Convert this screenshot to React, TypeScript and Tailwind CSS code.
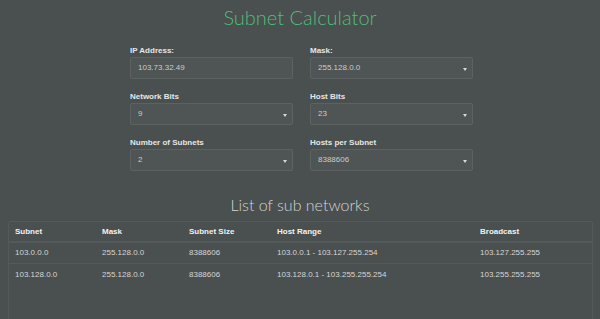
import React from "react";

const Caret = () => (
  <svg width="4" height="3" viewBox="0 0 4 3" className="absolute right-[5px] top-[10px]">
    <path d="M0 0 L4 0 L2 3 Z" fill="#d8d8d8" />
  </svg>
);

function Field({ label, value, select }: { label: string; value: string; select?: boolean }) {
  return (
    <div className="flex flex-col">
      <div className="h-[14px] flex items-end text-[8px] font-bold text-[#e6e6e6] leading-none">{label}</div>
      <div className="relative mt-[2px] h-[22px] border border-[#5c6161] bg-[#4f5454] rounded-[2px] flex items-center pl-[7px] text-[8px] text-[#cccccc] leading-none">
        {value}
        {select && <Caret />}
      </div>
    </div>
  );
}

const rows = [
  ["103.0.0.0", "255.128.0.0", "8388606", "103.0.0.1 - 103.127.255.254", "103.127.255.255"],
  ["103.128.0.0", "255.128.0.0", "8388606", "103.128.0.1 - 103.255.255.254", "103.255.255.255"],
];
const widths = ["w-[87px]", "w-[87px]", "w-[88px]", "w-[203px]", "flex-1"];

export default function App() {
  return (
    <div className="w-[600px] h-[319px] overflow-hidden bg-[#4a4f4f]" style={{ fontFamily: '"Liberation Sans", Arial, sans-serif' }}>
      <div className="h-[41px] flex justify-center pt-[7px]">
        <h1 className="text-[#4fbe7b] text-[20px] font-light leading-none" style={{ fontFamily: 'Lato, "Open Sans", sans-serif' }}>
          Subnet Calculator
        </h1>
      </div>
      <div className="ml-[130px] w-[343px] grid grid-cols-2 gap-x-[17px] gap-y-[8px]">
        <Field label="IP Address:" value="103.73.32.49" />
        <Field label="Mask:" value="255.128.0.0" select />
        <Field label="Network Bits" value="9" select />
        <Field label="Host Bits" value="23" select />
        <Field label="Number of Subnets" value="2" select />
        <Field label="Hosts per Subnet" value="8388606" select />
      </div>
      <div className="mt-[25px] h-[17px] flex justify-center items-center">
        <h2 className="text-[#d4d4d4] text-[16px] font-light leading-none" style={{ fontFamily: 'Lato, "Open Sans", sans-serif' }}>
          List of sub networks
        </h2>
      </div>
      <div className="mt-[8px] ml-[8px] w-[585px] h-[120px] border border-[#545959] rounded-[2px]">
        <div className="flex h-[21px] items-center border-b-2 border-[#545959] text-[8px] font-bold text-[#f2f2f2]">
          {["Subnet", "Mask", "Subnet Size", "Host Range", "Broadcast"].map((h, i) => (
            <div key={h} className={`${widths[i]} pl-[6px]`}>{h}</div>
          ))}
        </div>
        {rows.map((r, ri) => (
          <div key={ri} className={`flex h-[21px] items-center text-[8px] text-[#d6d6d6] ${ri === 0 ? "border-b border-[#545959]" : ""}`}>
            {r.map((c, i) => (
              <div key={i} className={`${widths[i]} pl-[6px]`}>{c}</div>
            ))}
          </div>
        ))}
      </div>
    </div>
  );
}
